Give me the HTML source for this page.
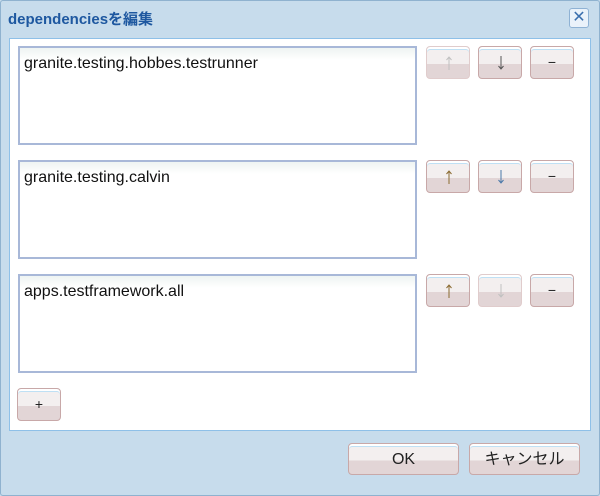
<!DOCTYPE html>
<html><head><meta charset="utf-8"><style>
*{box-sizing:border-box;margin:0;padding:0}
body{width:600px;height:496px;background:#c7dcec;font-family:"Liberation Sans","Noto Sans CJK JP",sans-serif;position:relative;overflow:hidden}
.frame{position:absolute;left:0;top:0;width:600px;height:496px;border:1px solid #8fb2cf;border-radius:3px}
.title{position:absolute;left:8px;top:8px;font-size:15px;font-weight:bold;color:#1e58a0}
.close{position:absolute;left:569px;top:8px;width:20px;height:20px;border:1px solid #8fb2d4;border-radius:3px;background:#eaf2fa;color:#3a6fae;font-size:16px;line-height:17px;text-align:center}
.panel{position:absolute;left:9px;top:38px;width:582px;height:393px;background:#fff;border:1px solid #8ec0e8}
.ta{position:absolute;left:18px;width:399px;height:99px;border:2px solid #a8b8d8;background:linear-gradient(#eef4f2,#fff 12px);font-size:16px;padding:7px 4px;color:#111}
.b{position:absolute;border:1px solid #c8a8a8;border-radius:4px;background:linear-gradient(#f3efef 0,#f3efef 55%,#e2d5d6 55%);box-shadow:inset 0 2px 0 #fff,inset 0 3px 0 #bfe0f4;text-align:center;color:#222;font-size:14px}
.sm{width:44px;height:33px;line-height:31px}
.sm svg{position:absolute;left:16px;top:7px}
.dis{border-color:#e0cccc}
.big{width:111px;height:32px;line-height:32px;font-size:16px}
</style></head><body>
<div class="frame"></div>
<div class="title">dependenciesを編集</div>
<div class="close">✕</div>
<div class="panel"></div>
<div class="ta" style="top:46px">granite.testing.hobbes.testrunner</div>
<div class="ta" style="top:160px">granite.testing.calvin</div>
<div class="ta" style="top:274px">apps.testframework.all</div>
<div class="b sm dis" style="left:426px;top:46px"><svg width="12" height="18"><path d="M6 3V16M3.5 6L6 3L8.5 6" stroke="#c0c0c0" fill="none"/></svg></div>
<div class="b sm" style="left:478px;top:46px"><svg width="12" height="18"><path d="M6 2V15M3.5 12L6 15L8.5 12" stroke="#555" fill="none"/></svg></div>
<div class="b sm" style="left:530px;top:46px">−</div>
<div class="b sm" style="left:426px;top:160px"><svg width="12" height="18"><path d="M6 3V16M3.5 6L6 3L8.5 6" stroke="#8a6a30" fill="none"/></svg></div>
<div class="b sm" style="left:478px;top:160px"><svg width="12" height="18"><path d="M6 2V15M3.5 12L6 15L8.5 12" stroke="#4a78a8" fill="none"/></svg></div>
<div class="b sm" style="left:530px;top:160px">−</div>
<div class="b sm" style="left:426px;top:274px"><svg width="12" height="18"><path d="M6 3V16M3.5 6L6 3L8.5 6" stroke="#8a6a30" fill="none"/></svg></div>
<div class="b sm dis" style="left:478px;top:274px"><svg width="12" height="18"><path d="M6 2V15M3.5 12L6 15L8.5 12" stroke="#c0c0c0" fill="none"/></svg></div>
<div class="b sm" style="left:530px;top:274px">−</div>
<div class="b sm" style="left:17px;top:388px">+</div>
<div class="b big" style="left:348px;top:443px">OK</div>
<div class="b big" style="left:469px;top:443px">キャンセル</div>
</body></html>
